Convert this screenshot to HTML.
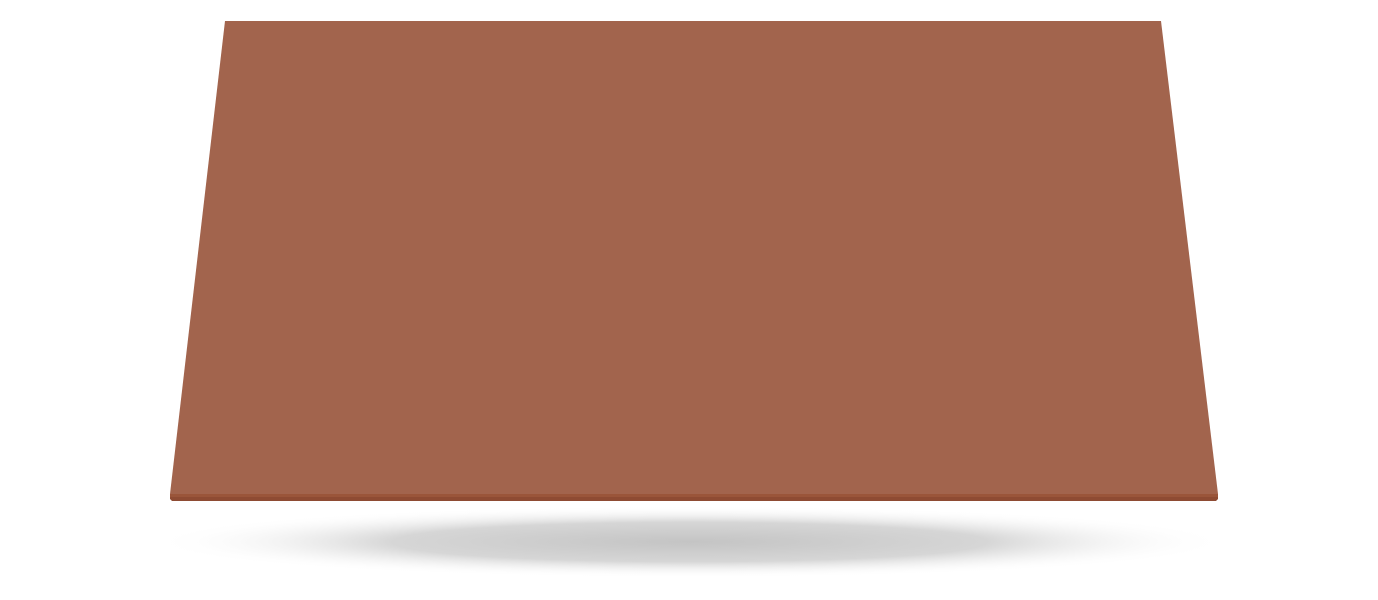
<!DOCTYPE html>
<html><head><style>
html,body{margin:0;padding:0;background:#fff;width:1378px;height:600px;overflow:hidden}
</style></head><body>
<svg width="1378" height="600" viewBox="0 0 1378 600" xmlns="http://www.w3.org/2000/svg">
<defs>
<radialGradient id="sh" cx="0.5" cy="0.5" r="0.5">
<stop offset="0" stop-color="#c4c4c4"/>
<stop offset="0.55" stop-color="#d6d6d6"/>
<stop offset="1" stop-color="#ffffff" stop-opacity="0"/>
</radialGradient>
</defs>
<ellipse cx="690" cy="542" rx="540" ry="36" fill="url(#sh)"/>
<polygon points="170,494 1218,494 1218,499 1216,501 172,501 170,499" fill="#8e4b33"/>
<polygon points="170,494 1218,494 1218,497 170,497" fill="#9a553a"/>
<polygon points="225,21 1161,21 1218,494 170,494" fill="#a2644d"/>
</svg>
</body></html>
